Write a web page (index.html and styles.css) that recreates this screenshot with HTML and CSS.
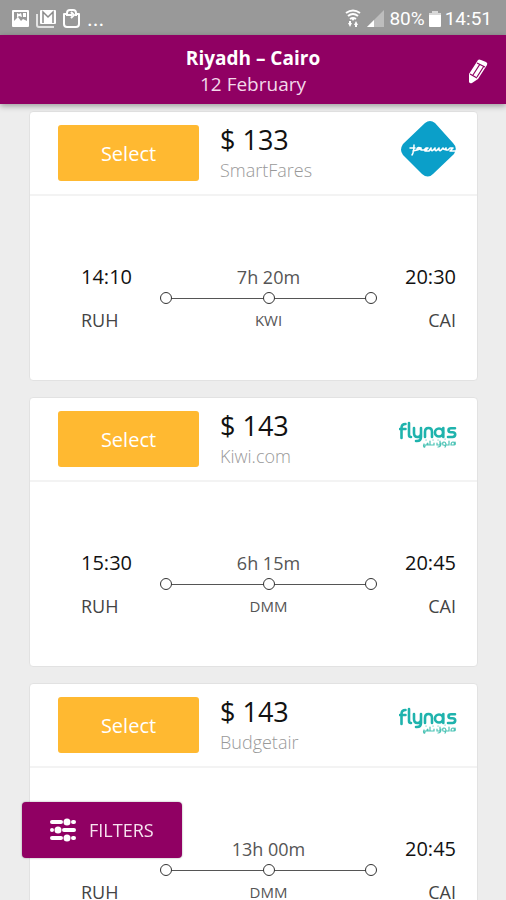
FILE: index.html
```html
<!DOCTYPE html>
<html lang="en">
<head>
  <meta charset="UTF-8" />
  <meta name="viewport" content="width=device-width, initial-scale=1.0" />
  <title>Riyadh – Cairo</title>
  <link rel="stylesheet" href="styles.css">
</head>
<body>
  <svg class="sprite" aria-hidden="true">
    <symbol id="flynas" viewBox="0 0 58 28">
      <g fill="none" stroke="#1fb3ad" stroke-width="2.6" stroke-linecap="round">
        <path d="M2.5 17V7q0-4 4-4M1 8h5.500M10 2v12q0 2 2 2" />
        <path d="M15 7v5q0 4 3.500 4T22 12V7M22 12v4q0 4-4 4h-1" />
        <path d="M26 16v-5q0-4 3.500-4T33 11v5" />
        <circle cx="40" cy="11.500" r="4" />
        <path d="M44.300 7v9M56 7.300h-4q-2.500 0-2.500 2t2.500 2h1.500q2.700 0 2.700 2.300T53.500 16h-4.500" />
      </g>
      <g fill="none" stroke="#4bc3b5" stroke-width="1.200" stroke-linecap="round">
        <path d="M56 21q1 3-1 3h-3q0-3 2-3t1 3M50 20v4h-3q0-3-2-3t-1 3q4 0 2 2M42 22q0 4-3 4M41 20v4h-3v-2M35 22v2h-4v-4M31 24h-2q0-3-1-1v1h-2q0 3-1 2t0-3" />
        <path d="M46 18h.1M39 19h.1M34 19h.1M27 19h.1" />
      </g>
    </symbol>
  </svg>

  <div class="app">
    <div class="status-bar">
      <div class="status-left">
        <svg width="77" height="24" viewBox="0 0 77 24">
          <path fill="#fff" fill-rule="evenodd" d="M3 3h15q1 0 1 1v15q0 1-1 1H3q-1 0-1-1V4q0-1 1-1zM4 5v9l4-4 3 4 2-2 4 2V5z" />
          <path fill="#fff" d="M7 6l2 1 2-1 1 4-3-1-2 2zM13 6h3v4h-3z" />
          <path fill="none" stroke="#e4e4e4" stroke-width="2" d="M27 7v11q0 2 2 2h15" />
          <rect x="30" y="3" width="16" height="14" rx="1" fill="#fff" />
          <path fill="none" stroke="#8b8b8b" stroke-width="1.500" d="M33 16V5l5 5 5-5v11" />
          <path fill="none" stroke="#fff" stroke-width="2" stroke-linejoin="round" d="M57 7h-3v10q0 3 3 3h9q3 0 3-3V7h-3" />
          <path fill="none" stroke="#fff" stroke-width="2" d="M57 9V6q0-3 3-3h3q3 0 3 3v3M56 8h6M61 5l3 3-3 3" />
        </svg>
        <span class="status-dots">...</span>
      </div>
      <div class="status-right">
        <svg width="40" height="20" viewBox="0 0 40 20">
          <g fill="none" stroke="#fff" stroke-width="2">
            <path d="M1 4q7-5 14 0M3 7q5-4 10 0M5 10q3-2 6 0" />
          </g>
          <path fill="#fff" d="M6 9h4l-2 3zM3 14h4l-2 4zM9 16l2-4 2 4zM10 15h2v3h-2zM4 12h2v3H4z" />
          <path fill="#bdbdbd" d="M39 1v17H22z" />
          <path fill="#fff" d="M29 11v7h-7z" />
        </svg>
        <span>80%</span>
        <svg width="12" height="18" viewBox="0 0 12 18">
          <path fill="#d8d8d8" d="M3 1h6v2h3v3H0V3h3z" />
          <path fill="#fff" d="M0 5h12v11q0 1-1 1H1q-1 0-1-1z" />
        </svg>
        <span>14:51</span>
      </div>
    </div>

    <header class="header">
      <div class="header-title">
        <h1>Riyadh – Cairo</h1>
        <p>12 February</p>
      </div>
      <button class="edit" type="button" aria-label="Edit search">
        <svg width="20" height="26" viewBox="0 0 20 26">
          <path fill="#fff" d="M10 2q1-1 3 0l5 2q2 1 1 3l-9 14-6 4q-2 1-3-1V16z" />
          <path fill="none" stroke="#900063" stroke-width="1.200" d="M12 6L5 17M16 8L9 19M9 5l8 4M2 16l7 4" />
        </svg>
      </button>
    </header>

    <main class="results">
      <article class="card">
        <div class="card-head">
          <button class="select" type="button">Select</button>
          <div class="offer">
            <div class="price">$ 133</div>
            <div class="agent">SmartFares</div>
          </div>
          <svg class="logo" width="58" height="58" viewBox="0 0 58 58" role="img" aria-label="Jazeera">
            <path fill="#0b9fc9" d="M26 3q5-4 10 0l18 20q5 5 1 11L34 54q-5 5-11 0L4 35q-4-5 0-11z" />
            <g fill="none" stroke="#fff" stroke-linecap="round" stroke-linejoin="round">
              <path stroke-width="1.500" d="M11 28h5M15 25q0 7-2 10M14 31l4-1" />
              <path stroke-width="1.600" d="M22 28q-4-1-4 1t4-1v2h3l2-2h2l-3 3h4l2-3v2q1 2 4-2v2q1 2 4-2v2q1 2 4-2 1 3 3 0v2h2l2-2h3l-3 3h6" />
            </g>
          </svg>
        </div>
        <div class="route">
          <span class="time">14:10</span>
          <span class="duration">7h 20m</span>
          <span class="time end">20:30</span>
          <div class="track"><i></i><i></i><i></i></div>
          <span class="code">RUH</span>
          <span class="via">KWI</span>
          <span class="code end">CAI</span>
        </div>
      </article>

      <article class="card">
        <div class="card-head">
          <button class="select" type="button">Select</button>
          <div class="offer">
            <div class="price">$ 143</div>
            <div class="agent">Kiwi.com</div>
          </div>
          <svg class="logo" width="58" height="28" role="img" aria-label="flynas"><use href="#flynas" /></svg>
        </div>
        <div class="route">
          <span class="time">15:30</span>
          <span class="duration">6h 15m</span>
          <span class="time end">20:45</span>
          <div class="track"><i></i><i></i><i></i></div>
          <span class="code">RUH</span>
          <span class="via">DMM</span>
          <span class="code end">CAI</span>
        </div>
      </article>

      <article class="card">
        <div class="card-head">
          <button class="select" type="button">Select</button>
          <div class="offer">
            <div class="price">$ 143</div>
            <div class="agent">Budgetair</div>
          </div>
          <svg class="logo" width="58" height="28" role="img" aria-label="flynas"><use href="#flynas" /></svg>
        </div>
        <div class="route">
          <span class="time"></span>
          <span class="duration">13h 00m</span>
          <span class="time end">20:45</span>
          <div class="track"><i></i><i></i><i></i></div>
          <span class="code">RUH</span>
          <span class="via">DMM</span>
          <span class="code end">CAI</span>
        </div>
      </article>
    </main>

    <button class="filters" type="button">
      <svg width="28" height="24" viewBox="0 0 28 24">
        <g stroke="#fff" stroke-width="4" stroke-linecap="round">
          <path d="M3 4h9M24 4h1M3 12h0M15 12h10M3 20h9M24 20h1" />
        </g>
        <g fill="#fff">
          <circle cx="18" cy="4" r="3.500" />
          <circle cx="9" cy="12" r="3.500" />
          <circle cx="18" cy="20" r="3.500" />
        </g>
      </svg>
      FILTERS
    </button>
  </div>
</body>
</html>
```
FILE: styles.css
```css
* {
  box-sizing: border-box;
}

body {
  font-family: 'Open Sans', sans-serif;
  margin: 0;
  background: #ededed;
  color: #111;
}

h1, p {
  margin: 0;
}

button {
  font-family: inherit;
  border: none;
  cursor: pointer;
}

.sprite {
  display: none;
}

.app {
  display: flex;
  flex-direction: column;
  height: 100vh;
  overflow: hidden;
}

/* status bar */
.status-bar {
  display: flex;
  flex: none;
  justify-content: space-between;
  align-items: center;
  height: 35px;
  padding: 2px 14px 0 10px;
  background: #999;
  color: #fff;
  font-family: Roboto, sans-serif;
  font-size: 19px;
}

.status-left,
.status-right {
  display: flex;
  align-items: center;
}

.status-right {
  gap: 4px;
}

.status-dots {
  font-size: 22px;
}

/* header */
.header {
  display: grid;
  flex: none;
  grid-template-columns: 40px 1fr 40px;
  align-items: center;
  height: 69px;
  padding: 3px 8px 0;
  background: #900063;
  color: #fff;
  text-align: center;
  box-shadow: 0 2px 6px rgba(0,0,0,0.35);
  z-index: 1;
}

.header-title {
  grid-column: 2;
}

.header h1 {
  font-size: 19px;
  font-weight: 700;
  line-height: 26px;
}

.header p {
  font-size: 19px;
  line-height: 26px;
  color: #f3d9ea;
}

.edit {
  display: flex;
  justify-content: center;
  padding: 0;
  background: none;
}

/* results */
.results {
  display: flex;
  flex: 1;
  flex-direction: column;
  gap: 16px;
  min-height: 0;
  padding: 7px 28px 16px 29px;
  overflow-y: auto;
  scrollbar-width: none;
}

.card {
  flex: none;
  background: #fff;
  border: 1px solid #e2e2e2;
  border-radius: 4px;
}

.card-head {
  display: flex;
  align-items: center;
  height: 84px;
  padding: 0 20px 0 28px;
  border-bottom: 2px solid #f3f3f3;
}

.select {
  width: 141px;
  height: 56px;
  background: #ffb931;
  color: #fff;
  font-size: 20px;
  border-radius: 3px;
}

.offer {
  flex: 1;
  margin-left: 21px;
}

.price {
  font-size: 27px;
  line-height: 34px;
}

.agent {
  color: #999;
  font-size: 18px;
  font-weight: 300;
  line-height: 26px;
}

.logo {
  margin-bottom: 8px;
}

.route {
  display: grid;
  grid-template-columns: 79px 1fr 79px;
  grid-template-rows: 28px 14px 30px;
  align-items: center;
  padding: 67px 21px 45px 51px;
  line-height: 28px;
}

.time {
  font-size: 20px;
}

.code,
.via {
  grid-row: 3;
}

.code {
  color: #444;
  font-size: 18px;
}

.end {
  text-align: right;
}

.duration,
.via {
  color: #555;
  font-size: 18px;
  text-align: center;
}

.via {
  font-size: 15px;
}

.track {
  display: flex;
  grid-column: 2;
  grid-row: 2;
  justify-content: space-between;
  background: linear-gradient(#555, #555) center / calc(100% - 12px) 1px no-repeat;
}

.track i {
  width: 12px;
  height: 12px;
  background: #fff;
  border: 1px solid #333;
  border-radius: 50%;
}

.filters {
  position: fixed;
  left: 22px;
  bottom: 42px;
  display: flex;
  align-items: center;
  gap: 12px;
  height: 56px;
  padding: 0 28px 0 27px;
  background: #900063;
  color: #f7e3f0;
  font-size: 18px;
  border-radius: 4px;
  box-shadow: 0 0 2px rgba(0,0,0,0.4);
  z-index: 2;
}
```
